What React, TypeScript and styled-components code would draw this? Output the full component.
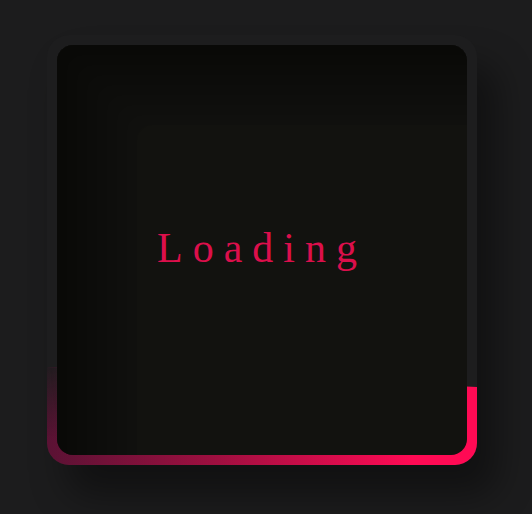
import React from "react";
import styled, { createGlobalStyle } from "styled-components";

const Global = createGlobalStyle`
  html, body {
    margin: 0;
    padding: 0;
    background: #1c1c1d;
    width: 532px;
    height: 514px;
    overflow: hidden;
  }
`;

const Page = styled.div`
  width: 532px;
  height: 514px;
  box-sizing: border-box;
  padding: 35px 0 0 47px;
  display: flex;
  align-items: flex-start;
  justify-content: flex-start;
`;

const Frame = styled.div`
  position: relative;
  width: 430px;
  height: 430px;
  box-sizing: border-box;
  padding: 10px;
  border-radius: 22px;
  overflow: hidden;
  background: #1d1d1e;
  box-shadow: 20px 30px 36px rgba(0, 0, 0, 0.4);
  display: flex;

  &::before,
  &::after {
    content: "";
    position: absolute;
    left: 0;
    right: 0;
    bottom: 0;
    height: 98px;
    clip-path: polygon(0 0, 100% 20px, 100% 100%, 0 100%);
  }

  &::before {
    background: linear-gradient(90deg, #5a1234 0%, #a00f40 40%, #ff0a54 85%, #ff0a54 100%);
  }

  &::after {
    background: linear-gradient(180deg, rgba(29, 29, 30, 0.95) 0%, rgba(29, 29, 30, 0) 75%);
    -webkit-mask-image: linear-gradient(90deg, #000 0%, transparent 45%);
    mask-image: linear-gradient(90deg, #000 0%, transparent 45%);
  }
`;

const Card = styled.div`
  position: relative;
  z-index: 1;
  flex: 1;
  border-radius: 16px;
  background: #12120f;
  box-shadow:
    inset 10px 10px 0 rgba(0, 0, 0, 0.06),
    inset 20px 20px 0 rgba(0, 0, 0, 0.06),
    inset 30px 30px 0 rgba(0, 0, 0, 0.06),
    inset 40px 40px 0 rgba(0, 0, 0, 0.06),
    inset 50px 50px 0 rgba(0, 0, 0, 0.06),
    inset 60px 60px 0 rgba(0, 0, 0, 0.06),
    inset 70px 70px 0 rgba(0, 0, 0, 0.06),
    inset 80px 80px 0 rgba(0, 0, 0, 0.06);
  display: flex;
  align-items: center;
  justify-content: center;
`;

const Label = styled.span`
  font-family: "Liberation Serif", "Times New Roman", serif;
  font-size: 42px;
  letter-spacing: 10px;
  color: #dc0f4b;
  line-height: 1.15;
  margin-top: -4px;
`;

export default function App() {
  return (
    <>
      <Global />
      <Page>
        <Frame>
          <Card>
            <Label>Loading</Label>
          </Card>
        </Frame>
      </Page>
    </>
  );
}
